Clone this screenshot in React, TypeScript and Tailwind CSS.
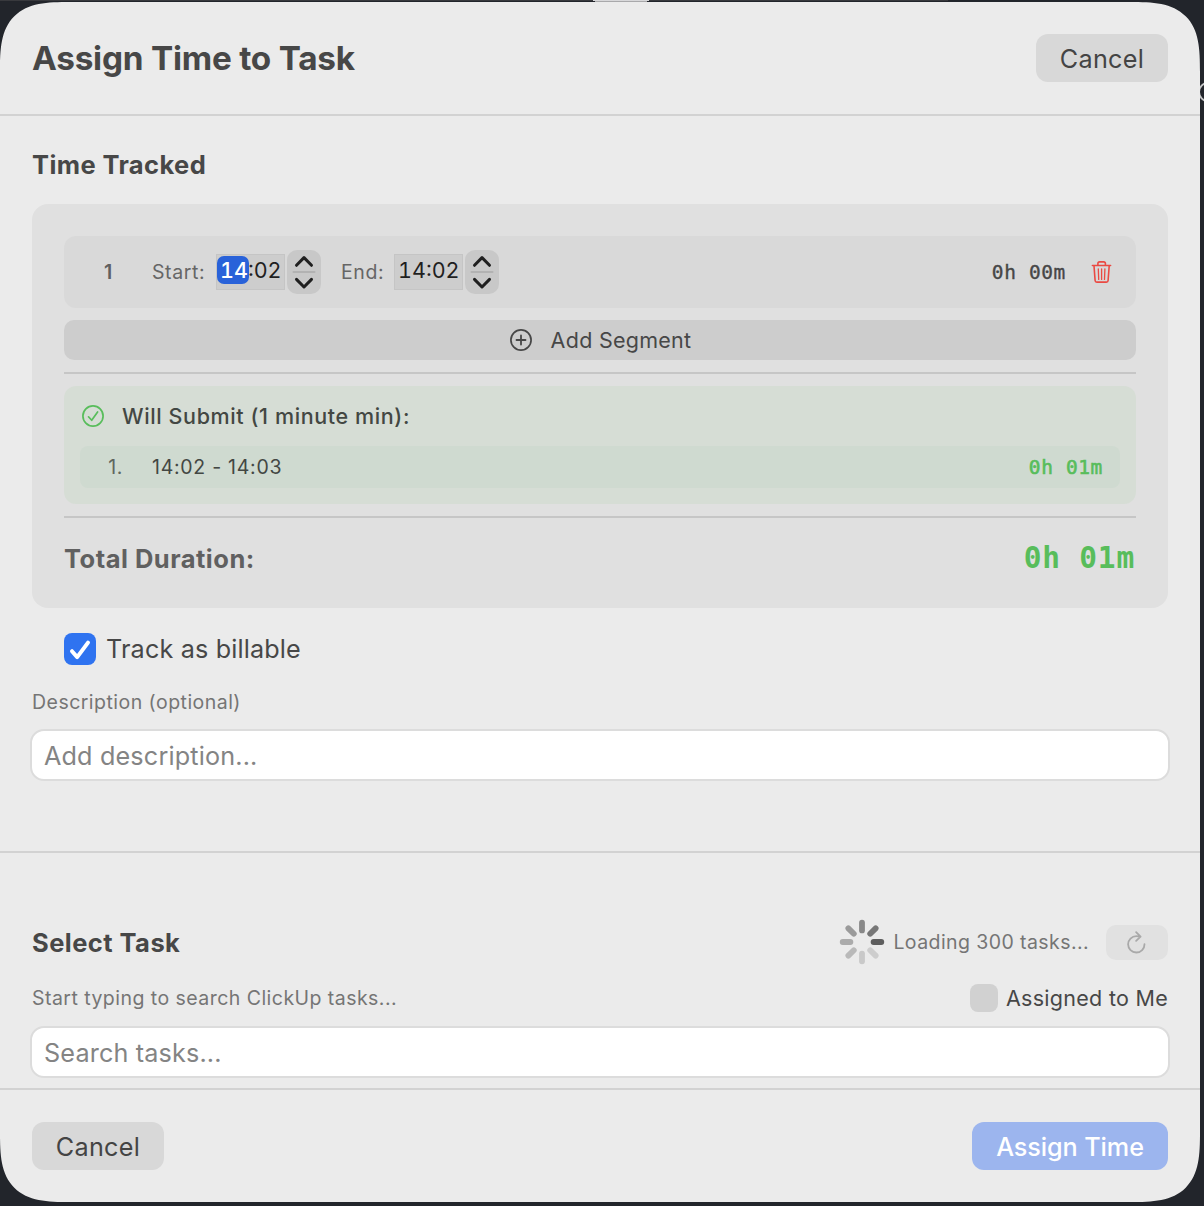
import React from "react";

const petals = [
  { angle: 0, color: "#5e5e5e" },
  { angle: 45, color: "#cdcdcd" },
  { angle: 90, color: "#c9c9c9" },
  { angle: 135, color: "#b9b9b9" },
  { angle: 180, color: "#ababab" },
  { angle: 225, color: "#9a9a9a" },
  { angle: 270, color: "#888888" },
  { angle: 315, color: "#777777" },
];

function Spinner() {
  return (
    <svg width="46" height="46" viewBox="-23 -23 46 46" className="shrink-0">
      {petals.map((p) => (
        <line
          key={p.angle}
          x1="11.6"
          y1="0"
          x2="19.3"
          y2="0"
          stroke={p.color}
          strokeWidth="5.8"
          strokeLinecap="round"
          transform={`rotate(${p.angle})`}
        />
      ))}
    </svg>
  );
}

function Stepper() {
  return (
    <div className="ml-0.5 h-11 w-[34px] rounded-[10px] bg-[#c8c8c8]">
      <svg width="34" height="44" viewBox="0 0 34 44" fill="none" strokeLinecap="round" strokeLinejoin="round">
        <path d="M9.5 15.3 17 7.6l7.5 7.7M9.5 29.4l7.5 7.6 7.5-7.6" stroke="#1f1f1f" strokeWidth="3" />
        <path d="M6.5 22h21" stroke="#b2b2b2" strokeWidth="2" />
      </svg>
    </div>
  );
}

function TimeField({ hours, minutes, selected }: { hours: string; minutes: string; selected?: boolean }) {
  return (
    <div className="h-9 w-[69px] border border-[#c5c5c5] bg-[#cdcdcd] pl-[3px] text-[21.5px] leading-[31px] tabular-nums whitespace-nowrap text-[#1f1f1f]">
      {selected ? (
        <span className="relative isolate font-medium text-white">
          <span className="absolute -top-px -left-[3px] -z-10 h-7 w-[32px] rounded-[7px] bg-[#2962d9]" />
          {hours}
        </span>
      ) : (
        <span>{hours}</span>
      )}
      <span className="relative">:{minutes}</span>
    </div>
  );
}

function Divider() {
  return <div className="h-0.5 shrink-0 bg-[#c6c6c6]" />;
}

export default function App() {
  return (
    <div className="relative h-[1206px] w-[1204px] overflow-hidden bg-[#22252b] pt-0.5 font-['Inter',sans-serif] text-[#474747]">
      {/* Sliver of the window behind the sheet */}
      <div className="absolute top-0 left-0 h-px w-[948px] bg-[#38393d]" />
      <div className="absolute top-0 left-[593px] h-px w-[56px] bg-[#d8d8da]" />
      <div className="absolute top-px left-[595px] h-px w-[52px] bg-[#a9a9ab]" />
      <div className="absolute top-[82px] left-[1198px] size-5 rounded-full border-2 border-[#c4c5c6]" />

      <div className="relative flex h-[1200px] w-[1200px] flex-col overflow-hidden rounded-[54px] bg-[#ebebeb] supports-[corner-shape:squircle]:rounded-[70px] [corner-shape:superellipse(1.6)]">
        <header className="flex h-[114px] shrink-0 items-center justify-between border-b-2 border-[#d2d2d2] px-8">
          <h1 className="pt-0.5 text-[33.3px] font-bold tracking-[-0.22px]">Assign Time to Task</h1>
          <button className="h-12 w-[132px] rounded-xl bg-[#d8d8d8] pt-[3px] text-[25.2px] tracking-[0.3px] text-[#444]">Cancel</button>
        </header>

        <main className="flex h-[735px] shrink-0 flex-col px-8">
          <h2 className="mt-[29px] h-10 text-[25.5px] leading-[40px] font-bold tracking-[0.4px]">Time Tracked</h2>

          <section className="mt-[19px] flex h-[404px] flex-col gap-3 rounded-2xl bg-[#e0e0e0] p-8">
            <div className="flex h-[72px] shrink-0 items-center rounded-xl bg-[#d9d9d9] pr-6 pl-4 text-[19.5px]">
              <span className="w-14 pt-0.5 text-center font-semibold text-[#606060]">1</span>
              <span className="ml-4 w-16 pt-0.5 tracking-[0.6px] text-[#666]">Start:</span>
              <TimeField hours="14" minutes="02" selected />
              <Stepper />
              <span className="ml-5 w-[53px] pt-0.5 tracking-[0.6px] text-[#666]">End:</span>
              <TimeField hours="14" minutes="02" />
              <Stepper />
              <span className="mr-px ml-auto pt-0.5 font-['DejaVu_Sans_Mono',monospace] text-[19.5px] tracking-[0.63px] text-[#474747] [-webkit-text-stroke:0.35px]">0h 00m</span>
              <svg className="ml-6" width="21" height="24" viewBox="0 0 21 24" fill="none" stroke="#ea4a43" strokeWidth="1.6" strokeLinecap="round" strokeLinejoin="round">
                <path d="M1.4 5.5h18.2M6.9 5.3V3.6Q6.900 1.900 8.600 1.900h4.100q1.700 0 1.700 1.700v1.700M3 5.700l1.100 14.800q.1 1.600 1.700 1.600h9.600q1.600 0 1.700-1.600L18.200 5.700" />
                <path d="M7.300 8.800l.4 10.600M10.600 8.800v10.600M13.900 8.800l-.4 10.600" strokeWidth="1.300" />
              </svg>
            </div>

            <button className="flex h-10 shrink-0 items-center justify-center gap-[18px] rounded-[10px] bg-[#cdcdcd] text-[21.5px] tracking-[0.27px]">
              <svg width="22" height="22" viewBox="-11 -11 22 22" fill="none" stroke="#474747" strokeLinecap="round">
                <circle r="10.100" strokeWidth="1.700" />
                <path d="M-4.500 0h9M0-4.500v9" strokeWidth="1.800" />
              </svg>
              <span className="ml-px -mr-px">Add Segment</span>
            </button>

            <Divider />

            <div className="h-[118px] shrink-0 rounded-xl bg-[#d6ddd5] px-4">
              <div className="flex h-[60px] items-center pl-0.5 text-[21.5px] font-medium tracking-[0.61px] text-[#434743]">
                <svg width="22" height="22" viewBox="-11 -11 22 22" fill="none" stroke="#58bd5b" strokeLinecap="round" strokeLinejoin="round">
                  <circle r="10.100" strokeWidth="1.700" />
                  <path d="M-4.500.8-1.300 4.300 4.600-4.100" strokeWidth="1.700" />
                </svg>
                <span className="ml-[18px]">Will Submit (1 minute min):</span>
              </div>
              <div className="flex h-[42px] items-center rounded-lg bg-[#cfdad0] px-4 text-[19.5px]">
                <span className="w-[27px] pt-0.5 text-right tracking-[0.57px] text-[#5e665f]">1.</span>
                <span className="ml-[29px] pt-0.5 tracking-[0.73px] text-[#434743]">14:02 - 14:03</span>
                <span className="mr-px ml-auto pt-0.5 font-['DejaVu_Sans_Mono',monospace] text-[19.5px] tracking-[0.63px] text-[#58bd5b] [-webkit-text-stroke:0.6px]">0h 01m</span>
              </div>
            </div>

            <Divider />

            <div className="-mt-3 flex h-20 shrink-0 items-center justify-between text-[25.5px] font-bold">
              <span className="pt-0.5 tracking-[0.5px] text-[#606060]">Total Duration:</span>
              <span className="mr-px font-['DejaVu_Sans_Mono',monospace] text-[29.5px] tracking-[0.8px] text-[#58bd5b]">0h 01m</span>
            </div>
          </section>

          <label className="mt-[25px] ml-8 flex h-8 items-center gap-2.5 text-[25.2px] tracking-[0.15px]">
            <span className="size-8 rounded-lg bg-[#2f73f0]">
              <svg width="32" height="32" viewBox="0 0 32 32" fill="none" stroke="#fff" strokeWidth="4" strokeLinecap="round" strokeLinejoin="round">
                <path d="M8 18.200l5.200 5.900L24 9.600" />
              </svg>
            </span>
            <span className="pt-0.5">Track as billable</span>
          </label>

          <p className="mt-[22px] h-[30px] text-[19.5px] leading-[30px] tracking-[0.47px] text-[#757575]">Description (optional)</p>
          <div className="-mx-0.5 mt-3 h-[52px] rounded-[14px] border-2 border-[#dcdcdc] bg-white px-3 text-[25.2px] leading-[50px] tracking-[0.16px] text-[#848484]">Add description...</div>
        </main>

        <section className="flex h-[239px] shrink-0 flex-col border-y-2 border-[#d2d2d2] px-8">
          <div className="mt-[66px] flex h-[46px] items-center">
            <h2 className="pt-[3px] text-[25.5px] font-bold tracking-[0.45px]">Select Task</h2>
            <div className="ml-auto flex items-center">
              <Spinner />
              <span className="ml-2 pt-0.5 text-[19.5px] tracking-[0.42px] text-[#757575]">Loading 300 tasks...</span>
              <span className="ml-[17px] flex h-[35px] w-[62px] items-center justify-center rounded-[10px] bg-[#e1e1e1]">
                <svg width="22" height="24" viewBox="0 0 22 24" fill="none" stroke="#a9a9a9" strokeWidth="1.800" strokeLinecap="round" strokeLinejoin="round">
                  <path d="M18.500 14.200a8.200 8.200 0 1 1-8.200-8.100q2.200 0 4.100.5M10.100 2.100l4.500 4.500-4.500 4.300" />
                </svg>
              </span>
            </div>
          </div>
          <div className="mt-[19px] flex h-7 items-center justify-between">
            <p className="pt-0.5 text-[19.5px] tracking-[0.46px] text-[#757575]">Start typing to search ClickUp tasks...</p>
            <label className="flex items-center gap-2 text-[21.5px] tracking-[0.28px]">
              <span className="size-7 rounded-lg bg-[#d1d1d1]" />
              Assigned to Me
            </label>
          </div>
          <div className="-mx-0.5 mt-3.5 h-[52px] shrink-0 rounded-[14px] border-2 border-[#dcdcdc] bg-white px-3 text-[25.2px] leading-[50px] tracking-[0.15px] text-[#848484]">Search tasks...</div>
        </section>

        <footer className="flex h-28 items-center justify-between px-8">
          <button className="h-12 w-[132px] rounded-xl bg-[#d8d8d8] pt-[3px] text-[25.2px] tracking-[0.3px] text-[#444]">Cancel</button>
          <button className="h-12 w-[196px] rounded-xl bg-[#9cb5ee] pt-[3px] text-[25.2px] font-medium tracking-[-0.09px] text-white">Assign Time</button>
        </footer>
      </div>
    </div>
  );
}
